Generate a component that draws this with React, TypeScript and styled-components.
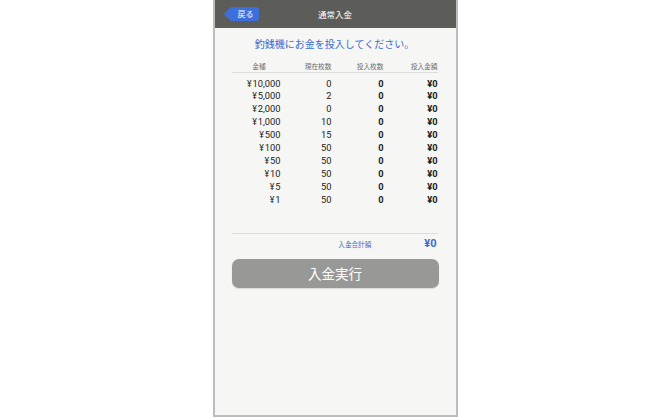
import React from 'react';
import styled, { createGlobalStyle } from 'styled-components';

const GlobalStyle = createGlobalStyle`
  html, body {
    margin: 0;
    padding: 0;
    background: #ffffff;
  }
  body {
    font-family: Roboto, "Noto Sans CJK JP", sans-serif;
  }
`;

const Page = styled.div`
  display: flex;
  justify-content: center;
  height: 417px;
`;

const Phone = styled.div`
  box-sizing: border-box;
  width: 245px;
  height: 417px;
  border: 2px solid #bcbcbc;
  border-top: none;
  background: #f6f7f4;
  display: flex;
  flex-direction: column;
`;

const Header = styled.div`
  position: relative;
  height: 28px;
  background: #5c5d59;
  display: flex;
  align-items: center;
  justify-content: center;
`;

const Title = styled.div`
  color: #ffffff;
  font-size: 8.5px;
  font-family: "Noto Sans CJK JP", sans-serif;
`;

const BackButton = styled.button`
  position: absolute;
  left: 16px;
  top: 7px;
  height: 14px;
  width: 28px;
  padding: 0 0 0 2px;
  border: none;
  border-radius: 0 3px 3px 0;
  background: #3d6fdc;
  color: #ffffff;
  font-size: 8px;
  font-family: "Noto Sans CJK JP", sans-serif;
  line-height: 14px;

  &::before {
    content: '';
    position: absolute;
    left: -7px;
    top: 0;
    border-style: solid;
    border-width: 7px 7px 7px 0;
    border-color: transparent #3d6fdc transparent transparent;
  }
`;

const Content = styled.div`
  padding: 8px 18px 0 17px;
  display: flex;
  flex-direction: column;
`;

const Lead = styled.div`
  text-align: center;
  color: #3a6bd2;
  font-size: 10px;
  line-height: 15px;
  font-family: "Noto Sans CJK JP", sans-serif;
  margin-bottom: 9px;
`;

const Table = styled.div`
  display: grid;
  grid-template-columns: 49px 51px 52px 54px;
`;

const HeadCell = styled.div<{ $center?: boolean }>`
  font-size: 6.7px;
  line-height: 12px;
  color: #6d6d6d;
  font-family: "Noto Sans CJK JP", sans-serif;
  text-align: ${p => (p.$center ? 'center' : 'right')};
  padding-left: ${p => (p.$center ? '6px' : '0')};
  border-bottom: 1px solid #dcdcdc;
  margin-bottom: 4.5px;
`;

const Cell = styled.div<{ $bold?: boolean }>`
  font-size: 9.3px;
  line-height: 12.9px;
  color: #222222;
  text-align: right;
  font-weight: ${p => (p.$bold ? 700 : 400)};
`;

const Yen = styled.span`
  margin-right: 1px;
  font-size: 0.95em;
`;

const Divider = styled.div`
  height: 1px;
  background: #dcdcdc;
  margin-top: 26px;
`;

const TotalRow = styled.div`
  display: flex;
  justify-content: flex-end;
  align-items: center;
  gap: 53px;
  height: 19px;
  padding-right: 1px;
`;

const TotalLabel = styled.span`
  color: #3a6bd2;
  font-size: 6.6px;
  font-family: "Noto Sans CJK JP", sans-serif;
  padding-top: 2px;
`;

const TotalValue = styled.span`
  color: #3a6bd2;
  font-size: 11px;
  font-weight: 700;
`;

const SubmitButton = styled.button`
  margin-top: 6px;
  height: 29px;
  width: 207px;
  border: none;
  border-radius: 7px;
  background: #989996;
  color: #ffffff;
  font-size: 13.5px;
  font-family: "Noto Sans CJK JP", sans-serif;
  box-shadow: 0 1px 1px rgba(0, 0, 0, 0.12);
`;

const rows = [
  { label: '10,000', count: 0 },
  { label: '5,000', count: 2 },
  { label: '2,000', count: 0 },
  { label: '1,000', count: 10 },
  { label: '500', count: 15 },
  { label: '100', count: 50 },
  { label: '50', count: 50 },
  { label: '10', count: 50 },
  { label: '5', count: 50 },
  { label: '1', count: 50 },
];

const App = () => {
  return (
    <>
      <GlobalStyle />
      <Page>
        <Phone>
          <Header>
            <BackButton>戻る</BackButton>
            <Title>通常入金</Title>
          </Header>
          <Content>
            <Lead>釣銭機にお金を投入してください。</Lead>
            <Table>
              <HeadCell $center>金種</HeadCell>
              <HeadCell>現在枚数</HeadCell>
              <HeadCell>投入枚数</HeadCell>
              <HeadCell>投入金額</HeadCell>
              {rows.map(row => (
                <React.Fragment key={row.label}>
                  <Cell><Yen>¥</Yen>{row.label}</Cell>
                  <Cell>{row.count}</Cell>
                  <Cell $bold>0</Cell>
                  <Cell $bold>¥0</Cell>
                </React.Fragment>
              ))}
            </Table>
            <Divider />
            <TotalRow>
              <TotalLabel>入金合計額</TotalLabel>
              <TotalValue>¥0</TotalValue>
            </TotalRow>
            <SubmitButton>入金実行</SubmitButton>
          </Content>
        </Phone>
      </Page>
    </>
  );
};

export default App;
